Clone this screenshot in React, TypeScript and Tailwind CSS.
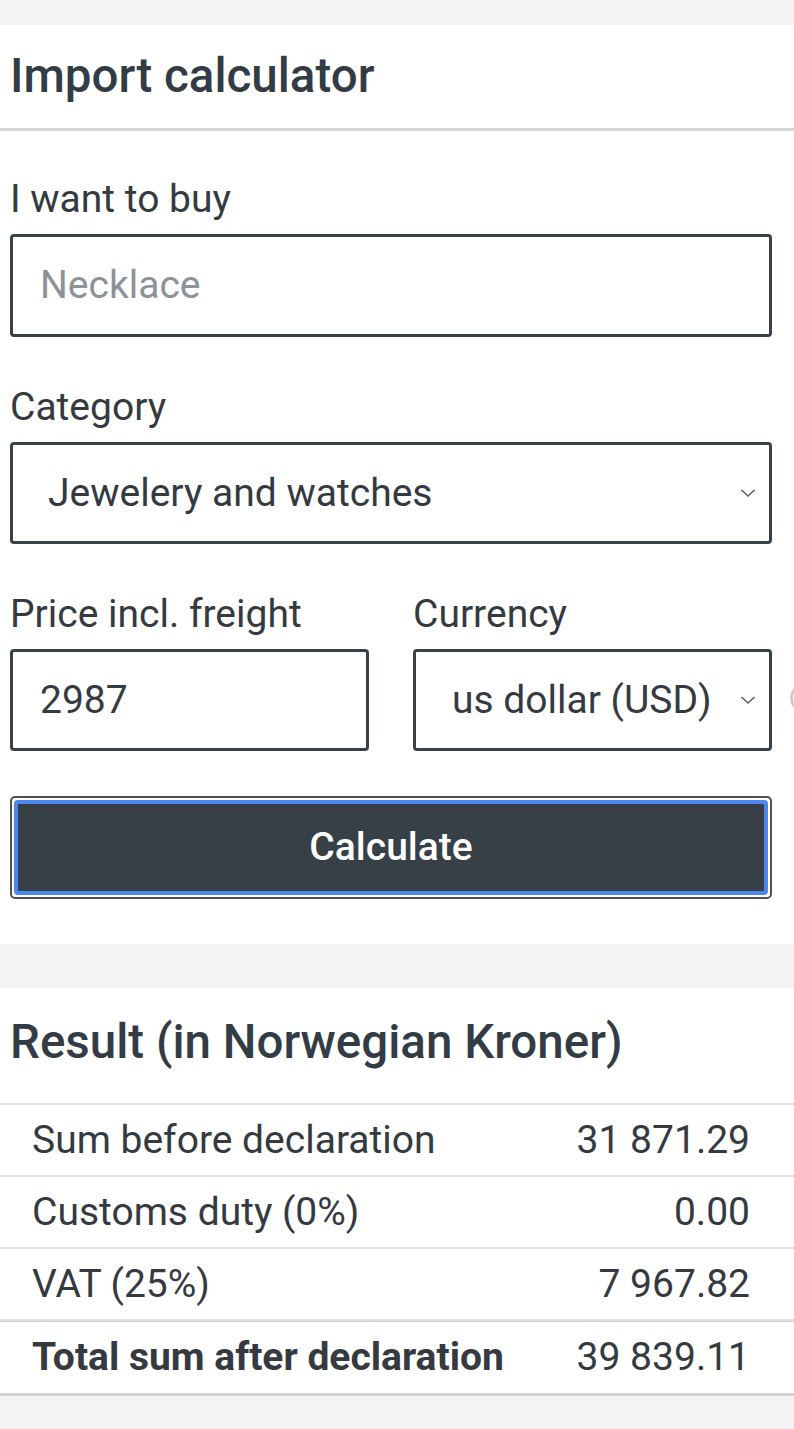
import React from "react";

function Chevron() {
  return (
    <svg width="16" height="10" viewBox="0 0 16 10" fill="none" className="shrink-0">
      <path d="M1.5 2 L8 8 L14.5 2" stroke="#5b6167" strokeWidth="1.6" />
    </svg>
  );
}

function Label({ children }: { children: React.ReactNode }) {
  return <div className="text-[39px] leading-[44px] text-[#343a40]">{children}</div>;
}

export default function App() {
  const rows = [
    ["Sum before declaration", "31 871.29"],
    ["Customs duty (0%)", "0.00"],
    ["VAT (25%)", "7 967.82"],
  ];
  return (
    <div className="w-[794px] min-h-[1429px] bg-[#f3f3f3] pt-[25px] font-[Roboto,sans-serif] overflow-hidden">
      <div className="bg-white">
        <div className="h-[106px] pt-[24px] pl-[10px] border-b-[3px] border-[#d3d6d8]">
          <h1 className="text-[47.5px] leading-[54px] font-medium text-[#333c45]">Import calculator</h1>
        </div>
        <div className="pl-[10px] pt-[46px] pb-[45px]">
          <Label>I want to buy</Label>
          <div className="mt-[13px] w-[762px] h-[103px] border-[3px] border-[#3a4249] rounded-[4px] flex items-center pl-[27px] text-[39px] text-[#8d9298]">
            Necklace
          </div>

          <div className="mt-[48px]">
            <Label>Category</Label>
          </div>
          <div className="mt-[13px] w-[762px] h-[102px] border-[3px] border-[#3a4249] rounded-[4px] flex items-center justify-between pl-[35px] pr-[13px] text-[39px] text-[#343a40]">
            <span>Jewelery and watches</span>
            <Chevron />
          </div>

          <div className="mt-[48px] flex gap-[44px]">
            <div className="w-[359px] shrink-0">
              <Label>Price incl. freight</Label>
              <div className="mt-[13px] h-[102px] border-[3px] border-[#3a4249] rounded-[4px] flex items-center pl-[27px] text-[39px] text-[#343a40]">
                2987
              </div>
            </div>
            <div className="w-[359px] shrink-0">
              <Label>Currency</Label>
              <div className="mt-[13px] h-[102px] border-[3px] border-[#3a4249] rounded-[4px] flex items-center justify-between pl-[36px] pr-[13px] text-[39px] text-[#343a40]">
                <span>us dollar (USD)</span>
                <Chevron />
              </div>
            </div>
            <div className="shrink-0 self-end mb-[38px] -ml-[26px] w-[30px] h-[30px] rounded-full border-[3px] border-[#c9cccf]" />
          </div>

          <div className="mt-[45px] w-[762px] h-[103px] rounded-[5px] border-2 border-[#4d5257] bg-white p-[2px]">
            <div className="h-full rounded-[4px] border-4 border-[#4a88ee] bg-[#373f47] flex items-center justify-center text-[39px] font-medium text-white">
              Calculate
            </div>
          </div>
        </div>
      </div>

      <div className="h-[44px]" />

      <div className="bg-white">
        <div className="pt-[27px] pl-[10px] pb-[34px]">
          <h2 className="text-[47.5px] leading-[54px] font-medium text-[#333c45]">Result (in Norwegian Kroner)</h2>
        </div>
        <div className="border-t-2 border-[#dcdfe2]">
          {rows.map(([k, v]) => (
            <div key={k} className="h-[72px] border-b-2 border-[#dcdfe2] flex items-center justify-between pl-[32px] pr-[44px] text-[39px] text-[#343a40]">
              <span>{k}</span>
              <span>{v}</span>
            </div>
          ))}
          <div className="h-[75px] border-t border-b-[3px] border-[#cfd3d6] flex items-center justify-between pl-[32px] pr-[44px] text-[39px] text-[#343a40]">
            <span className="font-bold">Total sum after declaration</span>
            <span>39 839.11</span>
          </div>
        </div>
      </div>
    </div>
  );
}
